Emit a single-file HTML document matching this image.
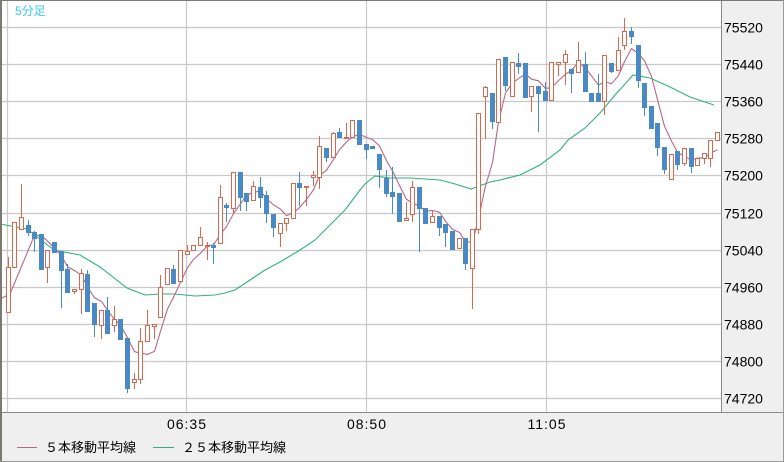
<!DOCTYPE html>
<html><head><meta charset="utf-8"><style>
html,body{margin:0;padding:0;background:#efefef;}
body{width:784px;height:462px;overflow:hidden;position:relative;font-family:"Liberation Sans","Noto Sans CJK JP",sans-serif;}
svg{position:absolute;left:0;top:0;}
</style></head><body>
<svg id="s" width="784" height="462" xmlns="http://www.w3.org/2000/svg">
<rect x="0" y="0" width="784" height="462" fill="#efefef"/>
<rect x="1" y="1" width="720" height="411" fill="#ffffff"/>
<g id="grid" stroke="#c8c8c8" stroke-width="1.2"></g>
<g id="ma"></g>
<g id="c"></g>
<line x1="721.5" y1="0" x2="721.5" y2="412" stroke="#8a8a8a" stroke-width="1"/>
<line x1="0" y1="412.5" x2="784" y2="412.5" stroke="#8a8a8a" stroke-width="1"/>
<line x1="0" y1="0.5" x2="784" y2="0.5" stroke="#7a7a72" stroke-width="1"/>
<line x1="1" y1="0" x2="1" y2="462" stroke="#7a7a72" stroke-width="2"/>
<line x1="783.5" y1="0" x2="783.5" y2="462" stroke="#9a9a9a" stroke-width="1"/>
<line x1="0" y1="461.5" x2="784" y2="461.5" stroke="#9a9a9a" stroke-width="1"/>
<text x="15" y="15" font-size="12" fill="#3cc8f0" font-family="Liberation Sans,Noto Sans CJK JP,sans-serif">5分足</text>
<g id="ax" font-size="14" fill="#000"></g>
<g font-size="14" fill="#000" letter-spacing="1">
<text x="187" y="429" text-anchor="middle">06:35</text>
<text x="367" y="429" text-anchor="middle">08:50</text>
<text x="547" y="429" text-anchor="middle">11:05</text>
</g>
<line x1="17" y1="447.5" x2="37" y2="447.5" stroke="#b5678a" stroke-width="1"/>
<text x="45" y="452" font-size="13" fill="#000" font-family="Liberation Sans,Noto Sans CJK JP,sans-serif">５本移動平均線</text>
<line x1="153" y1="447.5" x2="174" y2="447.5" stroke="#2fb37a" stroke-width="1"/>
<text x="182" y="452" font-size="13" fill="#000" font-family="Liberation Sans,Noto Sans CJK JP,sans-serif">２５本移動平均線</text>
</svg>
<script>
var NS="http://www.w3.org/2000/svg";
function el(p,t,a){var e=document.createElementNS(NS,t);for(var k in a)e.setAttribute(k,a[k]);p.appendChild(e);return e;}
var g=document.getElementById('grid'),ax=document.getElementById('ax');
var labels=[75520,75440,75360,75280,75200,75120,75040,74960,74880,74800,74720];
for(var k=0;k<11;k++){var y=Math.round(27+37.1*k)+0.5;el(g,'line',{x1:1,y1:y,x2:721,y2:y});
var t=el(ax,'text',{x:724,y:y+5});t.textContent=labels[k];}
[7.5,186.5,366.5,546.5].forEach(function(x){el(g,'line',{x1:x,y1:1,x2:x,y2:412});});
var D=[
[1,267,312,257,312],[1,222,267,222,267],[1,217,229,184,229],[0,225,232,220,235],[0,232,238,231,251],
[0,234,269,234,269],[1,250,267,250,282],[0,242,252,242,252],[0,251,270,251,307],[0,269,292,264,292],
[1,289,291,289,293],[1,273,289,269,313],[0,274,311,270,311],[0,303,324,303,336],[1,310,325,310,338],
[0,310,333,297,333],[1,319,325,306,331],[0,319,339,319,339],[0,338,388,338,392],[1,379,382,373,388],
[1,341,379,328,383],[1,325,341,310,341],[1,324,326,324,338],[1,287,317,275,317],[1,268,284,268,284],
[0,269,283,265,283],[1,250,281,250,281],[1,251,254,245,254],[1,245,250,245,250],[1,237,245,227,245],
[1,245,246,242,259],[0,245,247,243,263],[1,197,243,185,243],[0,205,207,203,221],[1,172,208,172,213],
[0,172,197,172,210],[0,193,201,193,210],[1,186,200,181,200],[0,187,197,177,207],[0,195,213,191,222],
[0,214,227,214,236],[1,223,233,223,246],[1,218,223,218,230],[1,183,218,183,218],[0,183,187,172,205],
[1,186,187,186,205],[1,175,177,171,185],[1,146,177,136,188],[0,148,157,148,161],[1,133,157,132,157],
[0,132,137,128,137],[1,137,138,123,138],[1,120,137,120,137],[0,120,144,120,144],[0,144,149,144,158],
[0,146,148,146,148],[0,154,169,154,187],[0,178,193,170,196],[0,192,196,167,213],[0,193,221,193,221],
[1,218,220,202,220],[1,187,214,181,221],[0,187,208,187,251],[0,208,223,208,223],[1,216,222,211,222],
[0,216,227,216,235],[0,224,232,224,246],[0,231,249,231,249],[1,238,248,238,248],[0,238,263,238,269],
[1,229,268,229,308],[1,113,229,113,233],[1,87,96,86,138],[0,93,121,93,128],[1,59,122,59,122],
[0,57,85,57,90],[1,62,96,62,96],[0,63,66,53,73],[0,63,97,63,97],[1,86,96,86,111],
[0,86,93,86,131],[0,91,100,82,100],[1,62,100,62,100],[1,62,64,62,75],[1,54,62,50,84],
[0,69,73,69,92],[1,60,72,42,72],[0,64,91,52,91],[0,93,101,93,101],[0,93,101,74,101],
[1,55,101,55,114],[0,63,71,63,72],[1,50,70,37,70],[1,31,45,18,49],[0,31,36,27,43],
[0,45,80,45,87],[0,83,107,83,115],[0,106,128,106,128],[0,123,147,123,155],[0,147,169,147,173],
[1,154,179,154,179],[0,151,164,151,169],[1,148,163,148,165],[0,148,166,148,172],[1,158,165,158,165],
[1,153,158,153,163],[1,140,158,140,166],[1,132,140,132,140]];
var c=document.getElementById('c'),ma=document.getElementById('ma');
var UP="#d4694f",DN="#4a8ac4";var closes=[],xs=[];
D.forEach(function(d,i){var x=Math.round(7.7+6.63*i);xs.push(x);
var col=d[0]?UP:DN;var top=d[1],bot=d[2];if(bot-top<1)bot=top+1;
el(c,'line',{x1:x+0.5,y1:d[3],x2:x+0.5,y2:d[4]+1,stroke:col,'stroke-width':1});
if(d[0]){el(c,'rect',{x:x-1.5,y:top+0.5,width:4,height:bot-top,fill:'#fff',stroke:col,'stroke-width':1});}
else{el(c,'rect',{x:x-2,y:top,width:5,height:bot-top+1,fill:col});}
closes.push(d[0]?top:bot);});
var pts=["0,299","10,294"];
for(var i=4;i<closes.length;i++){var s=0;for(var j=i-4;j<=i;j++)s+=closes[j];pts.push((xs[i]+0.5)+","+(s/5).toFixed(1));}
var g25="0,224 27,229 54,250 80,255 100,267 127,288 145,295 160,294 175,294 195,296 215,295 225,293 235,290 250,280 265,270 280,262 300,250 315,240 330,225 345,210 360,190 365,184 375,176 390,178 410,178 440,180 455,184 471,189 490,182 500,180 520,175 540,165 560,150 568,140 585,128 600,113 615,95 625,84 633,75 650,78 670,87 690,97 714,105";
el(ma,'polyline',{points:g25,fill:'none',stroke:'#2fb37a','stroke-width':1.1});
el(ma,'polyline',{points:pts.join(' '),fill:'none',stroke:'#b5678a','stroke-width':1.1});
</script>
</body></html>
